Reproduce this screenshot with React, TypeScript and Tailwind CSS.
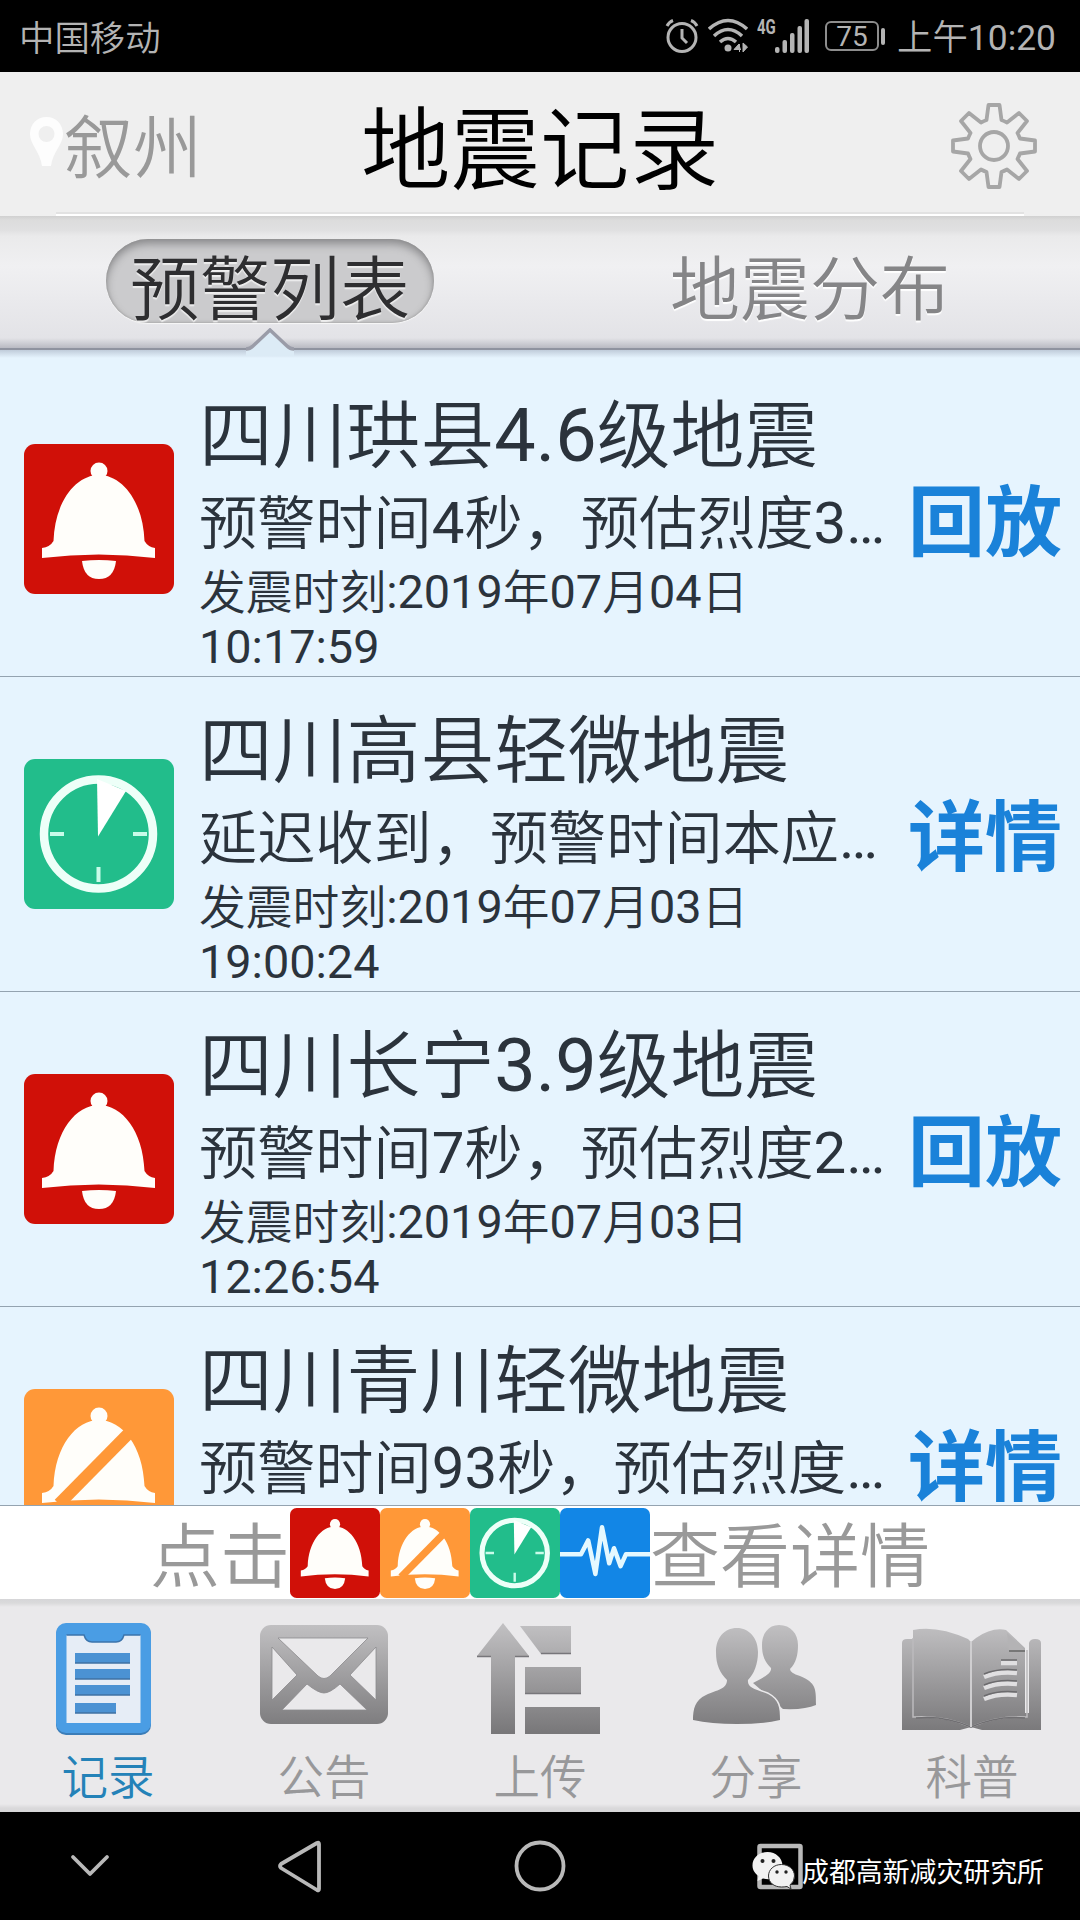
type TileKind = "bell" | "muted" | "clock" | "wave"

const FONT = "font-[Roboto,'Noto_Sans_CJK_SC',sans-serif]"

type QuakeRecord = { kind: TileKind; title: string; summary: string; date?: string; time?: string; action: string }

const records: QuakeRecord[] = [
  { kind: "bell", title: "四川珙县4.6级地震", summary: "预警时间4秒，预估烈度3…", date: "2019年07月04日", time: "10:17:59", action: "回放" },
  { kind: "clock", title: "四川高县轻微地震", summary: "延迟收到，预警时间本应…", date: "2019年07月03日", time: "19:00:24", action: "详情" },
  { kind: "bell", title: "四川长宁3.9级地震", summary: "预警时间7秒，预估烈度2…", date: "2019年07月03日", time: "12:26:54", action: "回放" },
  { kind: "muted", title: "四川青川轻微地震", summary: "预警时间93秒，预估烈度…", action: "详情" },
]

const tileColors = { bell: "#d01008", muted: "#ff9838", clock: "#22bd8b", wave: "#1286e6" }

/* Digits are set a weight heavier than the Chinese text around them */
function Mixed({ text }: { text: string }) {
  return text.split(/([\d.:…]+)/).map((part, i) =>
    i % 2 ? (
      <span key={i} className="font-normal relative -top-px">
        {part}
      </span>
    ) : (
      part
    )
  )
}

function Tile({ kind, className }: { kind: TileKind; className: string }) {
  return (
    <svg viewBox="0 0 150 150" className={className}>
      <rect width="150" height="150" rx="11" fill={tileColors[kind]} />
      {(kind === "bell" || kind === "muted") && (
        <g fill="#fffefa">
          <circle cx="75" cy="27" r="8.500" />
          <path d="M75 31C52 31 31 57 29.500 97Q26 103 18 104V114Q75 107 131 114V104Q124 103 120.500 97C119 57 98 31 75 31Z" />
          <path d="M58 117Q75 115 92 117Q90 135 75 135Q60 135 58 117Z" />
        </g>
      )}
      {kind === "muted" && <path d="M108 41L35 115" stroke={tileColors.muted} strokeWidth="12" />}
      {kind === "clock" && (
        <g>
          <circle cx="74.500" cy="75" r="54.500" fill="none" stroke="#edfff8" strokeWidth="8.500" />
          <path d="M73 20L102 32L74 77.500Z" fill="#fff" />
          <path d="M26 75H40M109 75H123M74.500 108V123" stroke="#c9fbe9" strokeWidth="4" />
        </g>
      )}
      {kind === "wave" && (
        <path
          d="M0 77H35L47 54L59 110L70 32L82 92L90 67L101 97L110 77H150"
          fill="none"
          stroke="#e4f8ff"
          strokeWidth="7.500"
          strokeLinejoin="round"
        />
      )}
    </svg>
  )
}

function StatusBar() {
  return (
    <div className="h-[72px] bg-black text-[#b4b4b4] flex items-center justify-between pl-[19px] pr-[24px] text-[35.400px] font-[350] leading-[72px]">
      <span className="pt-[5px]">中国移动</span>
      <div className="flex items-center">
        {/* Alarm */}
        <svg width="34" height="36" viewBox="0 0 34 36" fill="none" stroke="#b4b4b4" strokeWidth="3">
          <circle cx="17" cy="19.500" r="14" />
          <path d="M17 11V20L22 25M2 8Q4 4 8 2.500M32 8Q30 4 26 2.500" />
        </svg>
        {/* Wifi */}
        <svg width="40" height="36" viewBox="0 0 40 36" fill="none" stroke="#b4b4b4" strokeWidth="3.500" className="ml-[9px]">
          <path d="M1 11Q20 -6 39 11M6 18Q20 5 34 18M12 24Q20 17 28 24" />
          <circle cx="20" cy="30" r="3.500" fill="#b4b4b4" stroke="none" />
          <path d="M31.500 26V34M31 26L26 31.500H33M35 25V34L39.500 29Z" fill="#b4b4b4" strokeWidth="1" />
        </svg>
        <div className="flex h-[36px] ml-[9px] items-start">
          <span className="text-[20px] leading-[18px] font-bold w-[18px] scale-x-75 origin-left">4G</span>
          <svg width="34" height="36" viewBox="0 0 34 36" fill="#b4b4b4">
            <rect x="0" y="29" width="4.500" height="6" rx="2" />
            <rect x="7.500" y="22" width="4.500" height="13" rx="2" />
            <rect x="15" y="15" width="4.500" height="20" rx="2" />
            <rect x="22.500" y="8" width="4.500" height="27" rx="2" />
            <rect x="29.500" y="1" width="4.500" height="34" rx="2" />
          </svg>
        </div>
        <div className="ml-[16px] w-[54px] h-[30px] rounded-[6px] border-2 border-[#8d8d8d] text-[28px] leading-[27px] font-normal text-center">75</div>
        <div className="ml-[2px] w-[4px] h-[17px] rounded-full bg-[#b4b4b4]" />
        <span className="ml-[12px] pt-[3px]">
          上午<span className="font-normal">10:20</span>
        </span>
      </div>
    </div>
  )
}

function Header() {
  return (
    <header className="h-[144px] bg-[#efefef] relative flex items-center justify-between pl-[30px] pr-[43px]">
      <div className="flex items-center w-[206px]">
        <svg width="33" height="50" viewBox="0 0 33 50" className="-mt-[4px]">
          <path
            fillRule="evenodd"
            fill="#fdfdfd"
            d="M16.500 0C7 0 0 7 0 17C0 28 10 34 12 49H21C23 34 33 28 33 17C33 7 26 0 16.500 0ZM16.500 9A8 8 0 1 1 16.500 25A8 8 0 1 1 16.500 9Z"
          />
        </svg>
        <span className="ml-[1px] text-[69px] leading-[80px] font-[350] text-[#999] whitespace-nowrap pt-[11px]">叙州</span>
      </div>
      <h1 className="text-[89.500px] leading-[100px] font-[350] text-black pt-[15px]">地震记录</h1>
      <div className="w-[193px] flex justify-end pt-[4px]">
        <svg width="86" height="86" viewBox="-43 -43 86 86" fill="none" stroke="#a6a6a6" strokeWidth="3.800" strokeLinejoin="round">
          <circle r="14" />
          <path d="M-7.500 -26L-5.500 -41H5.500L7.500 -26Q10 -25 13 -23.500L25 -33L33 -25L23.500 -13Q25 -10 26 -7.500L41 -5.500V5.500L26 7.500Q25 10 23.500 13L33 25L25 33L13 23.500Q10 25 7.500 26L5.500 41H-5.500L-7.500 26Q-10 25 -13 23.500L-25 33L-33 25L-23.500 13Q-25 10 -26 7.500L-41 5.500V-5.500L-26 -7.500Q-25 -10 -23.500 -13L-33 -25L-25 -33L-13 -23.500Q-10 -25 -7.500 -26Z" />
        </svg>
      </div>
      <div className="absolute bottom-0 left-[56px] right-[56px] h-[4px] border-t-2 border-[#e2e2e2] bg-white" />
    </header>
  )
}

function Tabs() {
  return (
    <div className="relative h-[134px] grid grid-cols-2 justify-items-center text-[70px] leading-[84px] font-[350] border-b-2 border-[#8f939f] bg-[linear-gradient(#d0d0d0_0px,#dcdcdc_4px,#e0e0e1_14px,#eaeaeb_20px,#f0f0f2_50px,#e3e3e7_122px,#b9bac2_132px)]">
      <div className="mt-[23px] w-[328px] h-[84px] rounded-full text-center text-[#2e2e30] bg-[#cbcbcd] pt-[10px] shadow-[inset_0_5px_8px_#8c8c8e,inset_0_0_3px_#999,0_1px_1px_#f8f8f8] [text-shadow:0_2px_1px_#eee]">
        预警列表
      </div>
      <div className="mt-[33px] text-[#858587] [text-shadow:0_2px_1px_#fff]">地震分布</div>
      <svg width="48" height="28" viewBox="0 0 48 28" className="absolute left-[246px] top-[112px]">
        <path d="M0 21Q4 21 7 18L24 2L41 18Q44 21 48 21V28H0Z" fill="#dcebf6" />
        <path d="M0 21Q4 21 7 18L24 2L41 18Q44 21 48 21" fill="none" stroke="#9a9ca8" strokeWidth="3.500" />
      </svg>
    </div>
  )
}

function RecordList() {
  return (
    <div className="h-[1156px] overflow-hidden pt-[12px] bg-[linear-gradient(#c0ccda_0px,#e6f4fe_8px,#e6f4fe_100%)] border-b border-[#94a3b0]">
      {records.map((r) => (
        <div key={r.title} className="h-[315px] flex items-center border-b border-[#94a3b0] pl-[24px]">
          <Tile kind={r.kind} className="w-[150px] h-[150px] shrink-0" />
          <div className="self-start pt-[32px] ml-[25px] w-[706px] shrink-0 text-[#2b333c] font-[350]">
            <div className="text-[73.800px] leading-[86px] whitespace-nowrap">
              <Mixed text={r.title} />
            </div>
            <div className="text-[58.200px] leading-[88px] whitespace-nowrap">
              <Mixed text={r.summary} />
            </div>
            {r.date && (
              <div className="-mt-[2px] text-[46.800px] leading-[55px]">
                <Mixed text={`发震时刻:${r.date}`} />
                <br />
                <Mixed text={r.time ?? ""} />
              </div>
            )}
          </div>
          <div className="text-[77px] leading-[70px] font-bold text-[#1a82d9] whitespace-nowrap pt-[10px] ml-[3px]">{r.action}</div>
        </div>
      ))}
    </div>
  )
}

function Legend() {
  return (
    <div className="h-[93px] bg-white flex items-center justify-center text-[70px] leading-[82px] font-[350] text-[#999]">
      <span className="pt-[11px]">点击</span>
      <Tile kind="bell" className="w-[90px] h-[90px]" />
      <Tile kind="muted" className="w-[90px] h-[90px]" />
      <Tile kind="clock" className="w-[90px] h-[90px]" />
      <Tile kind="wave" className="w-[90px] h-[90px]" />
      <span className="pt-[11px]">查看详情</span>
    </div>
  )
}

/* All tab icons share one vertical metal gradient */
function Gradient({ id }: { id: string }) {
  return (
    <defs>
      <linearGradient id={id} x1="0" y1="0" x2="0" y2="112" gradientUnits="userSpaceOnUse">
        <stop offset="0" stopColor="#c2c1c3" />
        <stop offset="1" stopColor="#777678" />
      </linearGradient>
    </defs>
  )
}

function ClipboardIcon() {
  return (
    <svg width="96" height="112" viewBox="0 0 96 112" className="-ml-[9px]">
      <rect y="1" width="95" height="111" rx="10" fill="#3b7db8" />
      <rect width="95" height="110" rx="10" fill="#4a9de4" />
      <path d="M10.500 12H28Q30 19 36 19H60Q66 19 68 12H84.500V100H10.500Z" fill="#e6edf6" />
      <path d="M10.500 12H28Q30 19 36 19H60Q66 19 68 12H84.500" fill="none" stroke="#3b74ac" strokeWidth="1.500" />
      <path d="M19 35H74M19 51H74M19 67H74M19 85H60" stroke="#4b92d3" strokeWidth="10" />
      <path d="M19 40H74M19 56H74M19 72H74M19 90H60" stroke="#3f71a4" strokeWidth="1.500" />
    </svg>
  )
}

function MailIcon() {
  return (
    <svg width="128" height="112" viewBox="0 0 128 112">
      <Gradient id="mail" />
      <rect y="2" width="128" height="99" rx="11" fill="url(#mail)" />
      <g fill="#eae9eb" stroke="#8b8a8d" strokeWidth=".8">
        <path d="M18 15H108L70 53Q64 58 58 53Z" />
        <path d="M12 24L37 52L12 77Z" />
        <path d="M116 24L90 52L116 77Z" />
        <path d="M22 87L47 61Q58 70 64 70Q70 70 80 61L107 87Z" />
      </g>
    </svg>
  )
}

function UploadIcon() {
  return (
    <svg width="124" height="112" viewBox="0 0 124 112" className="-ml-[3px]">
      <Gradient id="upload" />
      <g fill="url(#upload)">
        <path d="M26 0L52 33H38V111H14V33H0Z" />
        <path d="M43 3H94V31H64Z" />
        <path d="M48 44H104V71H48Z" />
        <path d="M48 84H123V111H48Z" />
      </g>
      <path d="M0 33.500H14M38 33.500H52M64 30.500H94M48 70.500H104" stroke="#77767a" strokeWidth="1.500" />
    </svg>
  )
}

function PeopleIcon() {
  return (
    <svg width="124" height="112" viewBox="0 0 124 112" className="-ml-[2px]">
      <Gradient id="people" />
      <g fill="url(#people)" stroke="#eae9eb" strokeWidth="3" paintOrder="stroke">
        <path d="M86 2C75 2 69 11 69 22C69 33 72 39 78 45C79 51 69 55 60 60L90 86Q112 87 123 82C123 65 123 60 107 53Q97 50 97 46C103 40 105 32 105 22C105 11 98 2 86 2Z" />
        <path d="M44 5C31 5 23 15 23 29C23 42 27 50 34 57C34 66 24 67 13 72C2 77 0 86 0 97Q18 101 44 101Q70 101 87 97C87 84 86 77 75 71C62 66 54 65 55 57C61 51 65 41 65 29C65 15 56 5 44 5Z" />
      </g>
    </svg>
  )
}

function BookIcon() {
  return (
    <svg width="140" height="112" viewBox="0 0 140 112">
      <Gradient id="book" />
      <path d="M0 20Q0 16 5 16H11V7Q35 2 66 16L69 19L74 15Q90 4 104 7L123 25V90H127V20Q128 16 133 16Q139 16 139 20V107H80L69 104L58 107H0Z" fill="url(#book)" />
      <path d="M11 15V94Q42 92 69 104Q96 92 125 94V27" fill="none" stroke="#bcbbbd" strokeWidth="1.500" />
      <path d="M14 95Q42 92 69 104Q96 92 123 95" fill="none" stroke="#706f72" strokeWidth="1.500" />
      <path d="M69 19V104" stroke="#cfced0" strokeWidth="2" />
      <path d="M105 10L107 28H123Z" fill="#b4b3b5" />
      <path d="M107 28H123" stroke="#777" strokeWidth="2" />
      <path d="M99 40H115M82 54Q96 48 115 50M82 65Q96 59 115 61M82 76Q96 70 115 72" fill="none" stroke="#e0dfe1" strokeWidth="4.500" />
      <path d="M99 37H115M82 51Q96 45 115 47M82 62Q96 56 115 58M82 73Q96 67 115 69" fill="none" stroke="#6c6b6e" strokeWidth="1.500" />
    </svg>
  )
}

const tabs = [
  { label: "记录", Icon: ClipboardIcon, active: true },
  { label: "公告", Icon: MailIcon },
  { label: "上传", Icon: UploadIcon },
  { label: "分享", Icon: PeopleIcon },
  { label: "科普", Icon: BookIcon },
]

function TabBar() {
  return (
    <nav className="h-[213px] grid grid-cols-5 bg-[linear-gradient(#d6d6d8_0px,#dadadb_4px,#eae9eb_8px,#eae9eb_205px,#dad9db_209px,#d6d6d8_213px)]">
      {tabs.map(({ label, Icon, active }) => (
        <div key={label} className="flex flex-col items-center pt-[24px]">
          <Icon />
          <span className={`mt-[15px] text-[46.500px] leading-[56px] font-[350] ${active ? "text-[#2482b8]" : "text-[#98989a]"}`}>{label}</span>
        </div>
      ))}
    </nav>
  )
}

function NavBar() {
  return (
    <div className="relative h-[108px] bg-black">
      <svg width="1080" height="108" viewBox="0 0 1080 108" fill="none" stroke="#b9b9b9" strokeWidth="3.800" strokeLinejoin="round" strokeLinecap="round">
        <path d="M73 45L90 62L107 45" />
        <path d="M319 32V77Q319 79 317 78L281 56Q279 54 281 52L317 31Q319 30 319 32Z" />
        <circle cx="540" cy="54" r="23.500" />
        <rect x="759.500" y="34" width="41" height="41" rx="1" strokeWidth="4.500" />
      </svg>
      {/* WeChat watermark */}
      <div className="absolute left-[752px] top-[38px] flex items-center">
        <svg width="44" height="40" viewBox="0 0 44 40">
          <path d="M15.500 1C7 1 .5 7 .5 14.500C.5 19 3 22.500 6.500 25L5.500 30L11 27.500Q18 29 22 27Q31 21 30.500 14C30 7 24 1 15.500 1Z" fill="#f2f2f2" />
          <path d="M29.500 13.500C22 13.500 16.500 18.500 16.500 25C16.500 31.500 22 36 29.500 36Q32 36 35 35.500L39 38L38 34Q42.500 30.500 42.500 25C42.500 18.500 37 13.500 29.500 13.500Z" fill="#f2f2f2" stroke="#333" strokeWidth="1" />
          <g fill="#222">
            <circle cx="10.500" cy="10" r="2" />
            <circle cx="21.500" cy="10" r="2" />
            <circle cx="25" cy="21" r="1.700" />
            <circle cx="34" cy="21" r="1.700" />
          </g>
        </svg>
        <span className="ml-[6px] mt-[4px] text-[26.900px] leading-[38px] text-white whitespace-nowrap">成都高新减灾研究所</span>
      </div>
    </div>
  )
}

export default function App() {
  return (
    <div className={`w-[1080px] h-[1920px] overflow-hidden bg-black ${FONT}`}>
      <StatusBar />
      <Header />
      <Tabs />
      <RecordList />
      <Legend />
      <TabBar />
      <NavBar />
    </div>
  )
}
